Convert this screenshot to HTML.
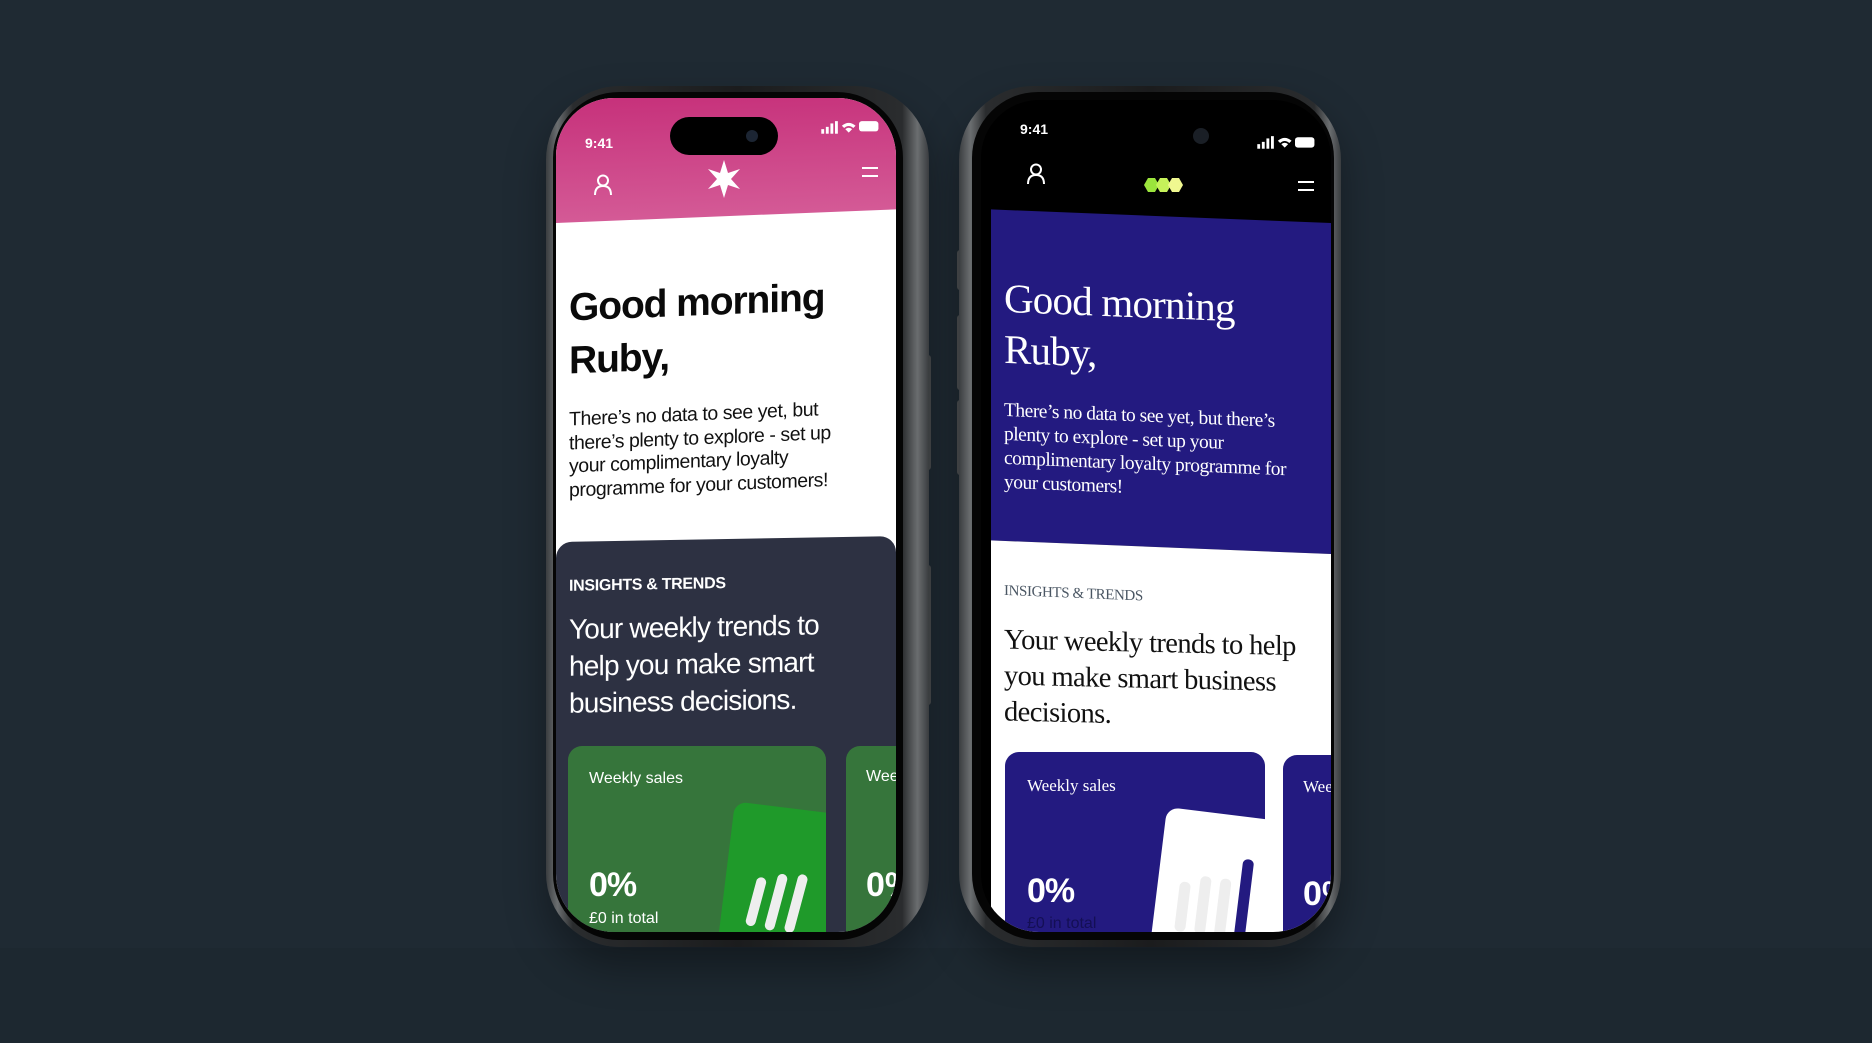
<!DOCTYPE html>
<html><head><meta charset="utf-8">
<style>
*{margin:0;padding:0;box-sizing:border-box}
html,body{width:1872px;height:1043px;overflow:hidden;background:#1f2a33;font-family:"Liberation Sans",sans-serif}
.abs{position:absolute}
.frame{position:absolute;border-radius:74px;background:linear-gradient(90deg,#3a3d40 0%,#6b6e70 3%,#2a2c2e 7%,#1b1c1d 50%,#2a2c2e 93%,#6b6e70 97%,#3a3d40 100%);box-shadow:0 20px 40px rgba(0,0,0,.35)}
.bezel{position:absolute;border-radius:66px;background:#050505}
.screen{position:absolute;overflow:hidden;border-radius:58px}
.btn{position:absolute;background:#4a4d50;border-radius:3px}
.nw{white-space:nowrap}
</style></head><body>
<div class="abs" style="left:0;top:948px;width:1872px;height:95px;background:#1d2830"></div>

<!-- LEFT PHONE -->
<div class="btn" style="left:923px;top:355px;width:8px;height:115px"></div>
<div class="btn" style="left:923px;top:565px;width:8px;height:140px"></div>
<div class="frame" style="left:546px;top:86px;width:383px;height:861px"></div>
<div class="bezel" style="left:553px;top:92px;width:350px;height:848px"></div>
<div class="screen" style="left:556px;top:98px;width:340px;height:834px;background:#fff">
  <div class="abs" style="left:0;top:0;width:340px;height:834px;transform:skewY(-2.3deg);transform-origin:0 0">
    <div class="abs" style="left:0;top:-20px;width:340px;height:145px;background:linear-gradient(180deg,#c42a76,#d45a96)"></div>
    <div class="abs nw" style="left:13px;top:184px;font-size:39px;font-weight:bold;letter-spacing:-1.1px;color:#0a0a0a;line-height:53px">Good morning<br>Ruby,</div>
    <div class="abs nw" style="left:13px;top:311px;font-size:19.5px;letter-spacing:-0.45px;color:#111;line-height:23.5px">There’s no data to see yet, but<br>there’s plenty to explore - set up<br>your complimentary loyalty<br>programme for your customers!</div>
  </div>
  <div class="abs" style="left:0;top:0;width:340px;height:834px;transform:skewY(-1deg);transform-origin:0 0">
    <div class="abs" style="left:0;top:444px;width:340px;height:420px;background:#2d3142;border-radius:16px 16px 0 0"></div>
    <div class="abs nw" style="left:13px;top:480px;font-size:16px;font-weight:bold;letter-spacing:-0.3px;color:#fff">INSIGHTS &amp; TRENDS</div>
    <div class="abs nw" style="left:13px;top:513px;font-size:28px;letter-spacing:-0.8px;color:#fff;line-height:37px">Your weekly trends to<br>help you make smart<br>business decisions.</div>
  </div>
  <div class="abs" style="left:12px;top:648px;width:258px;height:240px;background:#36753b;border-radius:14px;overflow:hidden">
    <div class="abs nw" style="left:21px;top:24px;font-size:16px;color:#fff">Weekly sales</div>
    <div class="abs nw" style="left:21px;top:120px;font-size:34px;font-weight:bold;color:#fff;letter-spacing:-1px">0%</div>
    <div class="abs nw" style="left:21px;top:164px;font-size:16px;color:#fff">£0 in total</div>
    <div class="abs" style="left:155px;top:62px;width:120px;height:190px;background:#1f9a2a;border-radius:12px;transform:rotate(7deg)">
      <div class="abs" style="left:28px;top:72px;width:10px;height:50px;background:#eee;border-radius:5px;transform:rotate(8deg)"></div>
      <div class="abs" style="left:48px;top:66px;width:10px;height:58px;background:#eee;border-radius:5px;transform:rotate(8deg)"></div>
      <div class="abs" style="left:68px;top:64px;width:10px;height:60px;background:#eee;border-radius:5px;transform:rotate(8deg)"></div>
    </div>
  </div>
  <div class="abs" style="left:290px;top:648px;width:80px;height:240px;background:#36753b;border-radius:14px;overflow:hidden">
    <div class="abs nw" style="left:20px;top:22px;font-size:16px;color:#fff">Wee</div>
    <div class="abs nw" style="left:20px;top:120px;font-size:34px;font-weight:bold;color:#fff">0%</div>
  </div>
  <div class="abs" style="left:114px;top:19px;width:108px;height:38px;background:#000;border-radius:19px"></div>
  <div class="abs" style="left:190px;top:32px;width:12px;height:12px;background:#1c2533;border-radius:50%"></div>
  <div class="abs nw" style="left:29px;top:37px;font-size:14px;font-weight:bold;color:#fff">9:41</div>
  <svg class="abs" style="left:264px;top:22px" width="62" height="16" viewBox="0 0 52 14" fill="#fff">
    <rect x="0" y="8" width="2.5" height="4"/><rect x="4" y="6" width="2.5" height="6"/><rect x="8" y="3" width="2.5" height="9"/><rect x="12" y="1" width="2.5" height="11"/>
    <path d="M18 5 Q24 0 30 5 L28 7 Q24 3.5 20 7Z M21 8 Q24 5.5 27 8 L24 11Z"/>
    <rect x="33" y="1" width="17" height="9" rx="2.5"/>
  </svg>
  <svg class="abs" style="left:37px;top:76px" width="20" height="22" viewBox="0 0 20 22" fill="none" stroke="#fff" stroke-width="2"><circle cx="10" cy="6.5" r="5"/><path d="M2 21 Q2 12 10 12 Q18 12 18 21"/></svg>
  <svg class="abs" style="left:149px;top:61px" width="38" height="40" viewBox="-19 -20 38 40" fill="#fff"><path d="M0 -19 L4 -6 L16 -10 L7 0 L16 10 L4 6 L0 19 L-4 6 L-16 10 L-7 0 L-16 -10 L-4 -6Z"/></svg>
  <svg class="abs" style="left:305px;top:68px" width="18" height="12" viewBox="0 0 18 12" stroke="#fff" stroke-width="2"><path d="M1 2 H17 M1 10 H17"/></svg>
</div>

<!-- RIGHT PHONE -->
<div class="btn" style="left:957px;top:250px;width:8px;height:40px"></div>
<div class="btn" style="left:957px;top:315px;width:8px;height:75px"></div>
<div class="btn" style="left:957px;top:400px;width:8px;height:75px"></div>
<div class="frame" style="left:959px;top:86px;width:382px;height:861px"></div>
<div class="bezel" style="left:972px;top:92px;width:362px;height:848px"></div>
<div class="screen" style="left:981px;top:100px;width:350px;height:832px;background:#000">
  <div class="abs" style="left:0;top:0;width:350px;height:832px;transform:skewY(2.3deg);transform-origin:0 0">
    <div class="abs" style="left:10px;top:109px;width:340px;height:331px;background:#231a80"></div>
    <div class="abs" style="left:10px;top:440px;width:340px;height:420px;background:#fff"></div>
    <div class="abs nw" style="left:23px;top:172px;font-family:'Liberation Serif',serif;font-size:41px;color:#fff;line-height:51px;letter-spacing:-0.8px">Good morning<br>Ruby,</div>
    <div class="abs nw" style="left:23px;top:298px;font-family:'Liberation Serif',serif;font-size:19.5px;color:#fff;line-height:24px;letter-spacing:-0.5px">There’s no data to see yet, but there’s<br>plenty to explore - set up your<br>complimentary loyalty programme for<br>your customers!</div>
    <div class="abs nw" style="left:23px;top:482px;font-family:'Liberation Serif',serif;font-size:15px;color:#4a5663;letter-spacing:-0.4px">INSIGHTS &amp; TRENDS</div>
  </div>
  <div class="abs" style="left:0;top:0;width:350px;height:832px;transform:skewY(1.3deg);transform-origin:0 0">
    <div class="abs nw" style="left:23px;top:522px;font-family:'Liberation Serif',serif;font-size:28.5px;color:#111;line-height:36px;letter-spacing:-0.6px">Your weekly trends to help<br>you make smart business<br>decisions.</div>
  </div>
  <div class="abs" style="left:24px;top:652px;width:260px;height:240px;background:#231a80;border-radius:14px;overflow:hidden">
    <div class="abs nw" style="left:22px;top:24px;font-family:'Liberation Serif',serif;font-size:17px;color:#fff">Weekly sales</div>
    <div class="abs nw" style="left:22px;top:120px;font-size:34px;font-weight:bold;color:#fff;letter-spacing:-1px">0%</div>
    <div class="abs nw" style="left:22px;top:163px;font-size:16px;color:#140f55">£0 in total</div>
    <div class="abs" style="left:150px;top:62px;width:125px;height:190px;background:#fff;border-radius:12px;transform:rotate(7deg)">
      <div class="abs" style="left:22px;top:72px;width:11px;height:50px;background:#eee;border-radius:5px"></div>
      <div class="abs" style="left:42px;top:64px;width:11px;height:58px;background:#eee;border-radius:5px"></div>
      <div class="abs" style="left:62px;top:64px;width:11px;height:60px;background:#eee;border-radius:5px"></div>
      <div class="abs" style="left:82px;top:42px;width:11px;height:90px;background:#231a80;border-radius:5px"></div>
    </div>
  </div>
  <div class="abs" style="left:302px;top:655px;width:80px;height:240px;background:#231a80;border-radius:14px;overflow:hidden">
    <div class="abs nw" style="left:20px;top:22px;font-family:'Liberation Serif',serif;font-size:17px;color:#fff">Wee</div>
    <div class="abs nw" style="left:20px;top:120px;font-size:34px;font-weight:bold;color:#fff">0%</div>
  </div>
  <div class="abs" style="left:212px;top:28px;width:16px;height:16px;background:#1a1f26;border-radius:50%"></div>
  <div class="abs nw" style="left:39px;top:21px;font-size:14px;font-weight:bold;color:#fff">9:41</div>
  <svg class="abs" style="left:276px;top:35px" width="60" height="16" viewBox="0 0 52 14" fill="#fff">
    <rect x="0" y="8" width="2.5" height="4"/><rect x="4" y="6" width="2.5" height="6"/><rect x="8" y="3" width="2.5" height="9"/><rect x="12" y="1" width="2.5" height="11"/>
    <path d="M18 5 Q24 0 30 5 L28 7 Q24 3.5 20 7Z M21 8 Q24 5.5 27 8 L24 11Z"/>
    <rect x="33" y="2" width="17" height="9" rx="2.5"/>
  </svg>
  <svg class="abs" style="left:45px;top:63px" width="20" height="22" viewBox="0 0 20 22" fill="none" stroke="#fff" stroke-width="2"><circle cx="10" cy="6.5" r="5"/><path d="M2 21 Q2 12 10 12 Q18 12 18 21"/></svg>
  <svg class="abs" style="left:163px;top:76px" width="40" height="18" viewBox="0 0 40 18">
    <polygon points="0,9 4,2 11,2 15,9 11,16 4,16" fill="#9be43c"/>
    <polygon points="12,9 16,2 23,2 27,9 23,16 16,16" fill="#c6f25a"/>
    <polygon points="24,9 28,2 35,2 39,9 35,16 28,16" fill="#f0f890"/>
  </svg>
  <svg class="abs" style="left:316px;top:80px" width="18" height="12" viewBox="0 0 18 12" stroke="#fff" stroke-width="2"><path d="M1 2 H17 M1 10 H17"/></svg>
</div>
</body></html>
